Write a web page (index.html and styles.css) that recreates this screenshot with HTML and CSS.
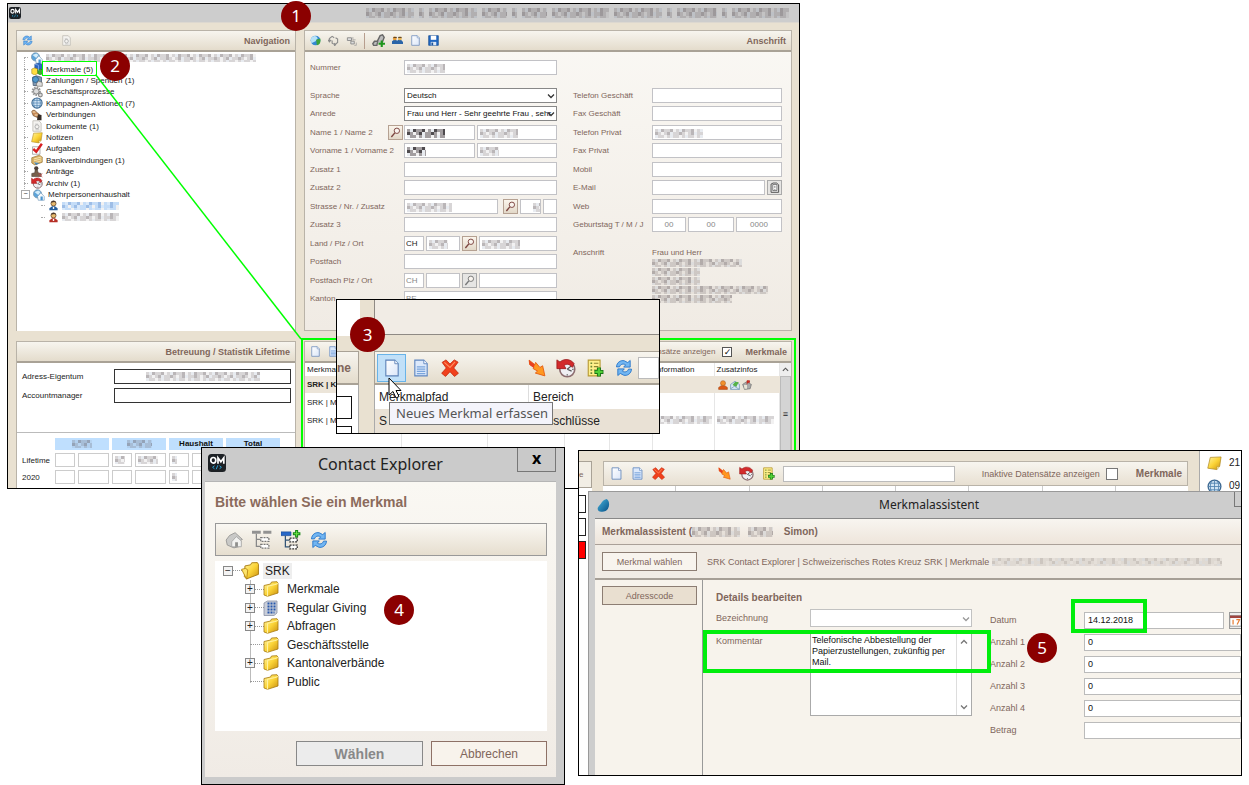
FILE: index.html
```html
<!DOCTYPE html>
<html lang="de">
<head>
<meta charset="utf-8">
<title>Contact Explorer – Merkmal erfassen</title>
<meta name="viewport" content="width=device-width, initial-scale=1">
<link rel="stylesheet" href="styles.css">
</head>
<body>
<svg class="sprite" aria-hidden="true">
  <defs>
    <linearGradient id="gold" x1="0" y1="0" x2="1" y2="1"><stop offset="0" stop-color="#fff3a0"/><stop offset=".5" stop-color="#fbd437"/><stop offset="1" stop-color="#c98f10"/></linearGradient>
    <linearGradient id="page" x1="0" y1="0" x2="1" y2="1"><stop offset="0" stop-color="#fff"/><stop offset="1" stop-color="#dbe6f8"/></linearGradient>
    <linearGradient id="drop" x1="0" y1="0" x2="1" y2="1"><stop offset="0" stop-color="#49b4dc"/><stop offset="1" stop-color="#064f86"/></linearGradient>
  </defs>
  <symbol id="om" viewBox="0 0 18 18"><rect width="18" height="18" rx="3.5" fill="#1d2125"/><ellipse cx="5.3" cy="6.3" rx="2.5" ry="2.8" fill="none" stroke="#fff" stroke-width="1.7"/><path d="M10 9.8V3.8l2.9 4 2.9-4v6" fill="none" stroke="#fff" stroke-width="1.7"/><path d="M6.5 11.8L4.6 13.3l1.9 1.5M11.5 11.8l1.9 1.5-1.9 1.5M9.8 11.3l-1.6 4" fill="none" stroke="#2ba3d4" stroke-width="1"/></symbol>
  <symbol id="refresh" viewBox="0 0 16 16"><path d="M1.300 7C1.600 3 5 .8 8.300 1.600L11.300 3.200 13.500 1.300V7.200H7.700L9.500 5.200C7.500 3.900 4.700 4.500 4 7z" fill="#72b6f2" stroke="#2675c9" stroke-width=".8"/><path d="M14.700 9c-.3 4-3.700 6.200-7 5.400L4.700 12.800 2.500 14.700V8.800h5.800L6.500 10.800c2 1.300 4.800.7 5.500-1.800z" fill="#72b6f2" stroke="#2675c9" stroke-width=".8"/></symbol>
  <symbol id="doc" viewBox="0 0 16 16"><path d="M2.500 1h8l3 3.200V15h-11z" fill="url(#page)" stroke="#5e82b8"/><path d="M10.500 1v3.200h3" fill="#fff" stroke="#5e82b8" stroke-width=".8"/></symbol>
  <symbol id="doclines" viewBox="0 0 16 16"><path d="M2.500 1h8l3 3.200V15h-11z" fill="#dce9fb" stroke="#5e86c0"/><path d="M10.500 1v3.200h3" fill="#fff" stroke="#5e86c0" stroke-width=".8"/><path d="M4.300 7h7.500M4.300 9h7.500M4.300 11h7.500M4.300 13h7.500" stroke="#7aa5dc" stroke-width="1.100"/></symbol>
  <symbol id="docgray" viewBox="0 0 16 16"><path d="M2.500 1h8l3 3.200V15h-11z" fill="#f4f3f0" stroke="#b9b6af"/><circle cx="8" cy="9" r="2.700" fill="none" stroke="#aaa" stroke-width="1.200"/><path d="M5.500 5.500h4M6 13h5" stroke="#bbb"/></symbol>
  <symbol id="cross" viewBox="0 0 16 16"><path d="M1 3L4.500.8 8 4.500 11.800.8 15.200 2.800 11.300 8l4.200 4.700L12 15.500 8 11.300l-4 4.200L.6 12.700 4.700 8z" fill="#f0401c" stroke="#c22608" stroke-width=".7"/><path d="M3 3l5 4.500L12.500 2.500" fill="none" stroke="#ff8f60" stroke-width="1"/></symbol>
  <symbol id="bolt" viewBox="0 0 16 16"><path d="M1 1l5 4 .8-2 3.800 4.500L13 6l2 9-8.500-2.500 2-1.800-4-2.200.8-1.200L1.500 5z" fill="#ff9820" stroke="#e45b10" stroke-width=".8"/><path d="M1 1l5 4-1 3L1.500 5z" fill="#e84020"/></symbol>
  <symbol id="history" viewBox="0 0 16 16"><circle cx="9" cy="9" r="6" fill="#efeff3" stroke="#8c6d70" stroke-width="1.300"/><path d="M9 9l3-2.500M9 9l3.500 1.500M9 13v1M13 9h1" stroke="#555" stroke-width="1"/><path d="M.7 1.500l2.500 1.700C6 .4 11.500.3 14.500 4.500l-1.500 3C10.500 4.500 8.500 4.500 6.500 6L8 8.500H.7z" fill="#d22b2c" stroke="#981518" stroke-width=".6"/></symbol>
  <symbol id="listadd" viewBox="0 0 16 16"><path d="M2 1h10.500v14H2z" fill="#fff08b" stroke="#b79a34"/><path d="M4 3.800h1.500M4 6.800h1.500M4 9.800h1.500M4 12.500h1.500" stroke="#6a8735" stroke-width="1.500"/><path d="M7 3.800h4M7 6.800h4M7 9.800h3" stroke="#8d8330"/><path d="M11.500 7.500v8M7.500 11.500h8" stroke="#167216" stroke-width="3.600"/><path d="M11.500 8.200v6.600M8.200 11.500h6.600" stroke="#50cf35" stroke-width="2"/></symbol>
  <symbol id="folder" viewBox="0 0 16 16"><path d="M1 4.500L7.500 3l1-2 5.500-.3 1 1.500V12L4.500 15.300 1 14z" fill="url(#gold)" stroke="#a6780f" stroke-width=".8"/><path d="M4.500 5.200L12 3.500 15 2.500M4.500 5.200v10" fill="none" stroke="#fff2a0" stroke-width="1.100"/></symbol>
  <symbol id="folderopen" viewBox="0 0 16 16"><path d="M3.500 3.500l5-1 1-1.800 5-.2 1 1.500v9L5 15 3 13z" fill="url(#gold)" stroke="#a6780f" stroke-width=".8"/><path d="M.5 6.500l3.500-.8 2 1.300-1 8.300z" fill="#fde46a" stroke="#b98814" stroke-width=".8"/></symbol>
  <symbol id="sheet" viewBox="0 0 16 16"><path d="M1 3L4.500 1h9.500v12l-3 2.500H1z" fill="#c9ced9" stroke="#8891a5" stroke-width=".8"/><path d="M4.500 3.500h8.500M4.500 6.500h8.500M4.500 9.500h8.500M4.500 12.500h7" stroke="#2858ac" stroke-width="2" stroke-dasharray="2 1"/></symbol>
  <symbol id="lens" viewBox="0 0 16 16"><circle cx="10" cy="5.500" r="3.900" fill="#f9f4ee" stroke="currentColor" stroke-width="1.400"/><path d="M7 8.500L2 14.500" stroke="currentColor" stroke-width="2"/></symbol>
  <symbol id="home" viewBox="0 0 16 16"><path d="M1 8L4 4l5-2.500 6.500 6L14 8v5.500L8 15 2 12.500z" fill="#c9c9c7" stroke="#8e8e8c" stroke-width=".7"/><path d="M6 9.500l4-4.500 4.500 3.800V14H6z" fill="#f2f2f0" stroke="#999" stroke-width=".6"/><path d="M9 10h2.500v4H9z" fill="#8f8f8d"/></symbol>
  <symbol id="treegray" viewBox="0 0 16 16"><path d="M0 .5h7v2.500H0zM9 .5h6.500V3H9z" fill="#929292"/><path d="M3.500 3v10h3M3.500 7.500h3" fill="none" stroke="#888"/><path d="M7 6h6.500v3H7zM7 11.500h6.500v3H7z" fill="#fff" stroke="#777" stroke-dasharray="1.500 .8"/></symbol>
  <symbol id="treeadd" viewBox="0 0 16 16"><path d="M0 1.500h8v3H0z" fill="#2868c8" stroke="#164893" stroke-width=".5"/><path d="M3.500 4.500v9h3M3.500 8h3" fill="none" stroke="#357"/><path d="M7 6.500h6v3H7zM7 12h6v3H7z" fill="#fff" stroke="#333" stroke-dasharray="1.500 .8"/><path d="M12.500 0v6M9.500 3h6" stroke="#138515" stroke-width="2.400"/><path d="M12.500.8v4.400M10.300 3h4.400" stroke="#6fe847" stroke-width=".8"/></symbol>
  <symbol id="globe" viewBox="0 0 16 16"><circle cx="8" cy="8" r="6.800" fill="#cfe3f3" stroke="#3e6890" stroke-width="1.400"/><path d="M8 1v14M1 8h14M2.500 4.500h11M2.500 11.500h11M5 2c-2 4-2 8 0 12M11 2c2 4 2 8 0 12" fill="none" stroke="#4e81b0" stroke-width=".9"/></symbol>
  <symbol id="house" viewBox="0 0 16 16"><circle cx="6" cy="6.500" r="5.500" fill="#5ca3d9" stroke="#7f99ac"/><path d="M2 4l5-2 3 2-3 4z" fill="#d3ecfa"/><path d="M6 10l4.500-5L15 10v5H7z" fill="#f7fafc" stroke="#6590b5" stroke-width=".8"/><path d="M10 10h3v5h-3z" fill="#4a95cf"/></symbol>
  <symbol id="cubes" viewBox="0 0 16 16"><path d="M5 1.500L10.500 0 15 2v7l-5 2-5-2z" fill="#2c66c2" stroke="#173e82" stroke-width=".6"/><path d="M1 8l4-1.500L9 8v6l-4 2-4-2z" fill="#ffdd40" stroke="#9d7b0b" stroke-width=".7"/><path d="M9 9l3.500-1L16 9.500v4L12.500 16 9 14z" fill="#45a834" stroke="#207015" stroke-width=".7"/><path d="M5 1.500l5 1.500v7" fill="none" stroke="#8bb5f0"/></symbol>
  <symbol id="pay" viewBox="0 0 16 16"><path d="M2 3l5-2 7 2v11H3z" fill="#819ab3" stroke="#42566d"/><circle cx="6" cy="6" r="4" fill="#5098cb" stroke="#285783"/><path d="M7 12l3-4 5 2v5H8z" fill="#ddd" stroke="#665f55" stroke-width=".8"/></symbol>
  <symbol id="gears" viewBox="0 0 16 16"><circle cx="7" cy="7" r="4.500" fill="none" stroke="#999" stroke-width="3.500" stroke-dasharray="2 1"/><circle cx="7" cy="7" r="3.700" fill="#ddd" stroke="#777"/><circle cx="12.500" cy="12" r="2.500" fill="#ddd" stroke="#888" stroke-width="1.500"/></symbol>
  <symbol id="people" viewBox="0 0 16 16"><path d="M1 4c0-3 5-3 6 0l4 3v7L8 11 3 9z" fill="#c98b56" stroke="#624021" stroke-width=".8"/><path d="M9 7l5 1v7H8z" fill="#372c26"/><path d="M2 4h4M5 8h4" stroke="#fae3be" stroke-width="1.500"/></symbol>
  <symbol id="note" viewBox="0 0 16 16"><path d="M3.500 1.500L15 1l-1.500 10-3 3.500L.8 13z" fill="url(#gold)" stroke="#b18c27" stroke-width=".8"/><path d="M10.500 14.500l0-3 3-.5" fill="#fff7bd" stroke="#b18c27" stroke-width=".6"/></symbol>
  <symbol id="check" viewBox="0 0 16 16"><path d="M2 5h10v10H2z" fill="#fff" stroke="#999"/><path d="M3 8l4 3.500L14.500 1" fill="none" stroke="#d81f22" stroke-width="3.200"/></symbol>
  <symbol id="bank" viewBox="0 0 16 16"><path d="M1 5l10-3.500L15 4v7L5 14.500 1 12z" fill="#d9b367" stroke="#8a6424" stroke-width=".8"/><path d="M4 6.500L14 4M4 9l10-2.500M4 12l10-3" stroke="#fff0c0"/><path d="M4 11l7 1-4 3z" fill="#4f89b6"/></symbol>
  <symbol id="stamp" viewBox="0 0 16 16"><circle cx="7" cy="3" r="2.800" fill="#4e4039"/><path d="M5.500 5h3l1 4 4 1v4H1v-4l4-1z" fill="#78604d" stroke="#40352d" stroke-width=".7"/><path d="M10 9l5 6M15 10l-5 5" stroke="#c54c4e"/></symbol>
  <symbol id="person" viewBox="0 0 16 16"><path d="M2 15V12l4-3h4l4 3v3z" fill="currentColor"/><circle cx="8" cy="5" r="3.700" fill="#e8b96d" stroke="#553b25"/><path d="M4.500 4c0-4 7-4 7 0L9 3z" fill="#49352a"/><path d="M7 10h2v3H7z" fill="#fff"/></symbol>
  <symbol id="contactperson" viewBox="0 0 16 16"><path d="M1 15V12l4-3h6l4 3v3z" fill="#dd5a16" stroke="#9c3c0a" stroke-width=".8"/><circle cx="8" cy="5" r="4" fill="#f2912d" stroke="#a2501a" stroke-width=".8"/></symbol>
  <symbol id="pair" viewBox="0 0 16 16"><path d="M0 13V9l3-2h3l3 4v2zM7 13V9l2-2h4l3 3v3z" fill="#2a64a8"/><circle cx="4" cy="5" r="2.700" fill="#e69b35"/><circle cx="11.500" cy="5" r="2.700" fill="#e6b557"/><path d="M2 3.500h5M9 3.500h5" stroke="#443223" stroke-width="1.300"/></symbol>
  <symbol id="save" viewBox="0 0 16 16"><path d="M1 1h14v14H1z" fill="#2067c1" stroke="#10478d"/><path d="M4 1h8v6H4z" fill="#fff"/><path d="M4 10h8v5H4z" fill="#dce7f5"/><path d="M5 11h2.500v4H5z" fill="#1c549a"/></symbol>
  <symbol id="ball" viewBox="0 0 16 16"><circle cx="8" cy="8" r="7" fill="#3488d2"/><path d="M1 6c3-7 10-5 10-1L8 9 2 12z" fill="#b6e2f8"/><path d="M9 7l6-2c1 6-1 9-5 10z" fill="#3ca33b"/></symbol>
  <symbol id="cycle" viewBox="0 0 16 16"><path d="M2 10V5l4-3 3 2M6 8v4l4 2 4-3V6l-3-2M0 7l2 3 2.500-3M9 12l2 2-2 2" fill="none" stroke="#8a8a8a" stroke-width="1.600"/></symbol>
  <symbol id="swap" viewBox="0 0 16 16"><path d="M2 4h6v4H2zM7 9h5v4H7z" fill="#ddd" stroke="#888" stroke-width="1.300"/><path d="M10 3v4h4M12 15h3v-4" fill="none" stroke="#999"/></symbol>
  <symbol id="clip" viewBox="0 0 16 16"><path d="M1 12l2-3h4l-1 5H2zM6 10l4-8 3-1 2 3-3 8" fill="#bbb" stroke="#666" stroke-width="1.700"/><path d="M12 8v8M8 12h8" stroke="#20961d" stroke-width="2.600"/></symbol>
  <symbol id="mail" viewBox="0 0 16 16"><path d="M1 7l7-5 7 5v8H1z" fill="#dceaf7" stroke="#5184ad"/><path d="M4 8l4-5h6l-4 8z" fill="#57b248"/><path d="M1 14l6-4 8 5" fill="none" stroke="#6488aa"/></symbol>
  <symbol id="mailbox" viewBox="0 0 16 16"><path d="M1 7l6-4 8 4-2 7-9 1z" fill="#aaa" stroke="#666"/><path d="M3 8h5v6H4z" fill="#e8e4d6"/><path d="M8 7V1h4v3h-3" fill="#e32d21" stroke="#a91a12"/></symbol>
  <symbol id="calendar" viewBox="0 0 16 16"><path d="M1 2h14v13H1z" fill="#fff" stroke="#888"/><path d="M1 2h14v3H1z" fill="#a04440"/><path d="M5 7v6M9 7h4l-3 6" fill="none" stroke="#e67d35" stroke-width="1.500"/></symbol>
  <symbol id="dropmark" viewBox="0 0 16 16"><path d="M12 0C15 2 16 7 13.500 12c-2 4-9 5-12 2-2-3 .5-5 3-8C6.500 3 8 1 12 0z" fill="url(#drop)"/></symbol>
  <symbol id="contact" viewBox="0 0 16 16"><path d="M3 3l3-1.500h5L14 4v11H3z" fill="#eee" stroke="#444" stroke-width="1.300"/><path d="M5.500 3.500h6v9h-6z" fill="#fff" stroke="#444"/><path d="M8.500 5.500v3M8.500 10v1.500" stroke="#777" stroke-width="1.400"/></symbol>
  <symbol id="chev" viewBox="0 0 8 8"><path d="M1 2.500L4 5.500l3-3" fill="none" stroke="currentColor" stroke-width="1.300"/></symbol>
  <symbol id="chevup" viewBox="0 0 8 8"><path d="M1 5.500l3-3 3 3" fill="none" stroke="currentColor" stroke-width="1.300"/></symbol>
</svg>

<main class="stage">

  <section class="window main-window" aria-label="Adressfenster">
    <header class="titlebar main-title">
      <svg class="i12"><use href="#om"/></svg>
      <span class="title-blur" aria-hidden="true"><i class="mosaic w50"></i><i class="mosaic w5"></i><i class="mosaic w50"></i><i class="mosaic w25"></i><i class="mosaic w5"></i><i class="mosaic w25"></i><i class="mosaic w60"></i><i class="mosaic w50"></i><i class="mosaic w5"></i><i class="mosaic w40"></i><i class="mosaic w5"></i><i class="mosaic w60"></i></span>
    </header>
    <div class="main-grid">
      <section class="panel nav-panel">
        <header class="bar">
          <button class="tool" aria-label="Aktualisieren"><svg class="i11"><use href="#refresh"/></svg></button>
          <button class="tool nav-doc" aria-label="Dokument"><svg class="i11"><use href="#docgray"/></svg></button>
          <h2 class="bar-title">Navigation</h2>
        </header>
        <ul class="nav-tree">
          <li><svg class="i12"><use href="#house"/></svg><i class="mosaic w210"></i></li>
          <li><svg class="i12"><use href="#cubes"/></svg><a href="#merkmale">Merkmale (5)</a></li>
          <li><svg class="i12"><use href="#pay"/></svg><a href="#zahlungen">Zahlungen / Spenden (1)</a></li>
          <li><svg class="i12"><use href="#gears"/></svg><a href="#prozesse">Geschäftsprozesse</a></li>
          <li><svg class="i12"><use href="#globe"/></svg><a href="#kampagnen">Kampagnen-Aktionen (7)</a></li>
          <li><svg class="i12"><use href="#people"/></svg><a href="#verbindungen">Verbindungen</a></li>
          <li><svg class="i12"><use href="#docgray"/></svg><a href="#dokumente">Dokumente (1)</a></li>
          <li><svg class="i12"><use href="#note"/></svg><a href="#notizen">Notizen</a></li>
          <li><svg class="i12"><use href="#check"/></svg><a href="#aufgaben">Aufgaben</a></li>
          <li><svg class="i12"><use href="#bank"/></svg><a href="#bank">Bankverbindungen (1)</a></li>
          <li><svg class="i12"><use href="#stamp"/></svg><a href="#antraege">Anträge</a></li>
          <li><svg class="i12"><use href="#history"/></svg><a href="#archiv">Archiv (1)</a></li>
          <li class="open"><svg class="i12"><use href="#house"/></svg><a href="#haushalt">Mehrpersonenhaushalt</a></li>
          <li class="child"><svg class="i11 blue"><use href="#person"/></svg><i class="mosaic bluish w60"></i></li>
          <li class="child"><svg class="i11 red"><use href="#person"/></svg><i class="mosaic w60"></i></li>
        </ul>
      </section>

      <section class="panel address-panel">
        <header class="bar">
          <button class="tool" aria-label="Übersicht"><svg class="i11"><use href="#ball"/></svg></button>
          <button class="tool" aria-label="Synchronisieren"><svg class="i11"><use href="#cycle"/></svg></button>
          <button class="tool" aria-label="Tauschen"><svg class="i11"><use href="#swap"/></svg></button>
          <span class="divider"></span>
          <button class="tool" aria-label="Verknüpfen"><svg class="i13"><use href="#clip"/></svg></button>
          <button class="tool" aria-label="Personen"><svg class="i11"><use href="#pair"/></svg></button>
          <button class="tool" aria-label="Neu"><svg class="i11"><use href="#doc"/></svg></button>
          <button class="tool" aria-label="Speichern"><svg class="i11"><use href="#save"/></svg></button>
          <h2 class="bar-title">Anschrift</h2>
        </header>
        <form class="address-form">
          <div class="row number-row"><label for="nr">Nummer</label><div class="fields"><input id="nr" class="redacted"></div></div>
          <div class="col">
            <div class="row"><label for="spr">Sprache</label><div class="fields"><div class="pick"><select id="spr"><option>Deutsch</option></select><svg><use href="#chev"/></svg></div></div></div>
            <div class="row"><label for="anr">Anrede</label><div class="fields"><div class="pick"><select id="anr"><option>Frau und Herr - Sehr geehrte Frau , sehr</option></select><svg><use href="#chev"/></svg></div></div></div>
            <div class="row"><label for="n1">Name 1 / Name 2</label><button type="button" class="find before" aria-label="Name suchen"><svg class="i11"><use href="#lens"/></svg></button><div class="fields"><input id="n1" class="redacted dark f71"><input aria-label="Name 2" class="redacted"></div></div>
            <div class="row"><label for="v1">Vorname 1 / Vorname 2</label><div class="fields"><input id="v1" class="redacted dark short f71"><input aria-label="Vorname 2" class="redacted short"></div></div>
            <div class="row"><label for="z1">Zusatz 1</label><div class="fields"><input id="z1"></div></div>
            <div class="row"><label for="z2">Zusatz 2</label><div class="fields"><input id="z2"></div></div>
            <div class="row"><label for="str">Strasse / Nr. / Zusatz</label><div class="fields"><input id="str" class="redacted long"><button type="button" class="find street" aria-label="Strasse suchen"><svg class="i11"><use href="#lens"/></svg></button><input aria-label="Nr." class="redacted tail f21"><input aria-label="Zusatz" class="f14"></div></div>
            <div class="row"><label for="z3">Zusatz 3</label><div class="fields"><input id="z3"></div></div>
            <div class="row"><label for="land">Land / Plz / Ort</label><div class="fields"><input id="land" class="f20 flush" value="CH"><input aria-label="Plz" class="redacted short f34"><button type="button" class="find" aria-label="Ort suchen"><svg class="i11"><use href="#lens"/></svg></button><input aria-label="Ort" class="redacted"></div></div>
            <div class="row"><label for="pf">Postfach</label><div class="fields"><input id="pf"></div></div>
            <div class="row"><label for="pfp">Postfach Plz / Ort</label><div class="fields"><input id="pfp" class="f20 flush faded" value="CH"><input aria-label="Postfach Plz" class="f34"><button type="button" class="find gray" aria-label="Postfach-Ort suchen"><svg class="i11"><use href="#lens"/></svg></button><input aria-label="Postfach Ort"></div></div>
            <div class="row"><label for="kt">Kanton</label><div class="fields"><input id="kt" class="faded flush" value="BE"></div></div>
          </div>
          <div class="col right">
            <div class="row"><label for="tg">Telefon Geschäft</label><div class="fields"><input id="tg"></div></div>
            <div class="row"><label for="fg">Fax Geschäft</label><div class="fields"><input id="fg"></div></div>
            <div class="row"><label for="tp">Telefon Privat</label><div class="fields"><input id="tp" class="redacted phone"></div></div>
            <div class="row"><label for="fp">Fax Privat</label><div class="fields"><input id="fp"></div></div>
            <div class="row"><label for="mo">Mobil</label><div class="fields"><input id="mo"></div></div>
            <div class="row"><label for="em">E-Mail</label><div class="fields"><input id="em"><button type="button" class="find gray" aria-label="E-Mail schreiben"><svg class="i11"><use href="#contact"/></svg></button></div></div>
            <div class="row"><label for="we">Web</label><div class="fields"><input id="we"></div></div>
            <div class="row"><label for="gt">Geburtstag T / M / J</label><div class="fields date"><input id="gt" class="f34" value="00"><input aria-label="Monat" value="00"><input aria-label="Jahr" value="0000"></div></div>
            <div class="row address"><span>Anschrift</span><div class="address-text"><span>Frau und Herr</span><i class="mosaic w90"></i><i class="mosaic w50"></i><i class="mosaic w50"></i><i class="mosaic w120"></i><i class="mosaic w80"></i></div></div>
          </div>
        </form>
      </section>

      <section class="panel stats-panel">
        <header class="bar"><h2 class="bar-title">Betreuung / Statistik Lifetime</h2></header>
        <form class="owner-form">
          <label for="own">Adress-Eigentum</label><input id="own" class="redacted wide">
          <label for="acc">Accountmanager</label><input id="acc">
        </form>
        <table class="stats">
          <colgroup><col class="cl"><col class="cn"><col class="cw"><col class="cn"><col class="cw"><col class="cn"><col class="cw"><col class="cn"><col class="cw"></colgroup>
          <thead><tr><td></td><th colspan="2"><i class="mosaic w20"></i></th><th colspan="2"><i class="mosaic w25"></i></th><th colspan="2">Haushalt</th><th colspan="2">Total</th></tr></thead>
          <tbody>
            <tr><th scope="row">Lifetime</th><td></td><td></td><td><i class="mosaic w10"></i></td><td><i class="mosaic w20"></i></td><td><i class="mosaic w5"></i></td><td></td><td></td><td></td></tr>
            <tr><th scope="row">2020</th><td></td><td></td><td></td><td></td><td><i class="mosaic w5"></i></td><td></td><td></td><td></td></tr>
          </tbody>
        </table>
      </section>

      <section class="panel traits-panel">
        <header class="bar">
          <button class="tool" aria-label="Neues Merkmal"><svg class="i11"><use href="#doc"/></svg></button>
          <button class="tool" aria-label="Merkmal bearbeiten"><svg class="i11"><use href="#doclines"/></svg></button>
          <label class="inactive">Inaktive Datensätze anzeigen <input type="checkbox" checked></label>
          <h2 class="bar-title">Merkmale</h2>
        </header>
        <div class="scroll-area">
          <table class="traits">
            <colgroup><col class="c96"><col class="c86"><col class="c77"><col class="c45"><col class="c43"><col class="c61"><col></colgroup>
            <thead><tr><th>Merkmal</th><th></th><th></th><th></th><th></th><th>Information</th><th>Zusatzinfos</th></tr></thead>
            <tbody>
              <tr class="selected"><td>SRK | Ka</td><td></td><td></td><td></td><td></td><td></td><td class="icons"><svg class="i10"><use href="#contactperson"/></svg> <svg class="i10"><use href="#mail"/></svg> <svg class="i10"><use href="#mailbox"/></svg></td></tr>
              <tr><td>SRK | Me</td><td></td><td></td><td></td><td></td><td></td><td></td></tr>
              <tr><td>SRK | Me</td><td></td><td></td><td></td><td></td><td><i class="mosaic w60"></i></td><td><i class="mosaic w60"></i></td></tr>
              <tr class="rest"><td></td><td></td><td></td><td></td><td></td><td></td><td></td></tr>
            </tbody>
          </table>
          <div class="scrollbar"><svg><use href="#chevup"/></svg><span class="thumb">≡</span></div>
        </div>
      </section>
    </div>
  </section>

  <span class="mark mark-tree"></span>
  <span class="mark mark-traits"></span>
  <svg class="connector" viewBox="0 0 207 266" aria-hidden="true"><path d="M0.500 0.500L206 265"/></svg>

  <section class="window zoom-window" aria-label="Ausschnitt Merkmale">
    <div class="zoom-left">
      <div class="zoom-white"></div>
      <div class="zoom-bar">ne</div>
      <div class="zoom-boxes"><span></span><span></span></div>
    </div>
    <div class="zoom-right">
      <div class="zoom-panel"></div>
      <div class="zoom-tools">
        <button class="tool active" aria-label="Neues Merkmal erfassen"><svg class="i18"><use href="#doc"/></svg></button>
        <button class="tool" aria-label="Bearbeiten"><svg class="i18"><use href="#doclines"/></svg></button>
        <button class="tool" aria-label="Löschen"><svg class="i18"><use href="#cross"/></svg></button>
        <button class="tool push" aria-label="Zuweisen"><svg class="i18"><use href="#bolt"/></svg></button>
        <button class="tool" aria-label="Verlauf"><svg class="i20"><use href="#history"/></svg></button>
        <button class="tool" aria-label="Liste ergänzen"><svg class="i18"><use href="#listadd"/></svg></button>
        <button class="tool" aria-label="Aktualisieren"><svg class="i18"><use href="#refresh"/></svg></button>
        <input aria-label="Suche">
      </div>
      <table class="zoom-table">
        <thead><tr><th>Merkmalpfad</th><th>Bereich</th></tr></thead>
        <tbody><tr><td>S</td><td>Ausschlüsse</td></tr></tbody>
      </table>
    </div>
    <span class="tooltip" role="tooltip">Neues Merkmal erfassen</span>
    <svg class="cursor" viewBox="0 0 14 22" aria-hidden="true"><path d="M1 1v17l4-3.500 3 6.500 3-1.500-3-6h5z" fill="#fff" stroke="#000"/></svg>
  </section>

  <section class="window wizard-window" aria-label="Merkmale bearbeiten">
    <div class="wiz-back">
      <div class="wiz-left"><div class="wiz-stub">e</div><div class="wiz-boxes"><span></span><span></span><span class="filled"></span></div></div>
      <div class="wiz-list">
        <header class="wiz-tools">
          <button class="tool" aria-label="Neu"><svg class="i13"><use href="#doc"/></svg></button>
          <button class="tool" aria-label="Bearbeiten"><svg class="i13"><use href="#doclines"/></svg></button>
          <button class="tool" aria-label="Löschen"><svg class="i13"><use href="#cross"/></svg></button>
          <button class="tool gap" aria-label="Zuweisen"><svg class="i13"><use href="#bolt"/></svg></button>
          <button class="tool" aria-label="Verlauf"><svg class="i15"><use href="#history"/></svg></button>
          <button class="tool" aria-label="Liste ergänzen"><svg class="i13"><use href="#listadd"/></svg></button>
          <input type="text" aria-label="Suche">
          <label>Inaktive Datensätze anzeigen <input type="checkbox"></label>
          <h2>Merkmale</h2>
        </header>
        <div class="wiz-strip"><i></i><i></i><i></i><i></i><i></i><i></i><i></i></div>
      </div>
      <ul class="wiz-side"><li><svg class="i15"><use href="#note"/></svg>21</li><li><svg class="i15"><use href="#globe"/></svg>09</li></ul>
    </div>
    <section class="wizard">
      <header class="wizard-title"><svg class="i13"><use href="#dropmark"/></svg><h2>Merkmalassistent</h2><button aria-label="Minimieren"></button></header>
      <div class="wizard-body">
        <p class="wizard-head">Merkmalassistent (<i class="mosaic big w50"></i><i class="mosaic big w25"></i> Simon)</p>
        <div class="wizard-path"><button>Merkmal wählen</button><span>SRK Contact Explorer | Schweizerisches Rotes Kreuz SRK | Merkmale <i class="mosaic pale w230"></i></span></div>
        <div class="wizard-main">
          <aside><button>Adresscode</button></aside>
          <form class="details">
            <h3>Details bearbeiten</h3>
            <div class="details-left">
              <label for="bez">Bezeichnung</label><div class="pick"><select id="bez"><option></option></select><svg><use href="#chev"/></svg></div>
              <label for="kom">Kommentar</label><div class="memo"><textarea id="kom">Telefonische Abbestellung der Papierzustellungen, zukünftig per Mail.</textarea><div class="memo-scroll"><svg><use href="#chevup"/></svg><svg><use href="#chev"/></svg></div></div>
            </div>
            <div class="details-right">
              <label for="dat">Datum</label><div class="date-line"><input id="dat" value="14.12.2018"><button type="button" aria-label="Kalender"><svg class="i13"><use href="#calendar"/></svg></button></div>
              <label for="a1">Anzahl 1</label><input id="a1" value="0">
              <label for="a2">Anzahl 2</label><input id="a2" value="0">
              <label for="a3">Anzahl 3</label><input id="a3" value="0">
              <label for="a4">Anzahl 4</label><input id="a4" value="0">
              <label for="bet">Betrag</label><input id="bet">
            </div>
          </form>
        </div>
      </div>
    </section>
  </section>

  <section class="window dialog" aria-label="Contact Explorer">
    <header class="dialog-title"><svg class="i18"><use href="#om"/></svg><h2>Contact Explorer</h2><button aria-label="Schliessen">x</button></header>
    <div class="dialog-body">
      <h3>Bitte wählen Sie ein Merkmal</h3>
      <div class="dialog-tools">
        <button class="tool" aria-label="Start"><svg class="i18"><use href="#home"/></svg></button>
        <button class="tool" aria-label="Zuklappen"><svg class="i20"><use href="#treegray"/></svg></button>
        <button class="tool" aria-label="Aufklappen"><svg class="i20"><use href="#treeadd"/></svg></button>
        <button class="tool" aria-label="Aktualisieren"><svg class="i18"><use href="#refresh"/></svg></button>
      </div>
      <div class="folder-tree">
        <div class="node root"><button class="toggle" aria-label="SRK schliessen">−</button><svg class="i18"><use href="#folderopen"/></svg><span class="chosen">SRK</span></div>
        <div class="branch">
          <div class="node"><button class="toggle" aria-label="Merkmale öffnen">+</button><svg class="i16"><use href="#folder"/></svg><span>Merkmale</span></div>
          <div class="node"><button class="toggle" aria-label="Regular Giving öffnen">+</button><svg class="i16"><use href="#sheet"/></svg><span>Regular Giving</span></div>
          <div class="node"><button class="toggle" aria-label="Abfragen öffnen">+</button><svg class="i16"><use href="#folder"/></svg><span>Abfragen</span></div>
          <div class="node leaf"><svg class="i16"><use href="#folder"/></svg><span>Geschäftsstelle</span></div>
          <div class="node"><button class="toggle" aria-label="Kantonalverbände öffnen">+</button><svg class="i16"><use href="#folder"/></svg><span>Kantonalverbände</span></div>
          <div class="node leaf"><svg class="i16"><use href="#folder"/></svg><span>Public</span></div>
        </div>
      </div>
      <footer class="actions"><button class="primary">Wählen</button><button>Abbrechen</button></footer>
    </div>
  </section>

  <span class="mark thick mark-date"></span>
  <span class="mark thick mark-comment"></span>
  <span class="badge b1">1</span>
  <span class="badge b2">2</span>
  <span class="badge large b3">3</span>
  <span class="badge b4">4</span>
  <span class="badge b5">5</span>
</main>
</body>
</html>
```

FILE: styles.css
```css
* { box-sizing: border-box; }
:root {
  --sans: "Liberation Sans", sans-serif;
  --ui: "Noto Sans", sans-serif;
  --sand: #e9e1d1;
  --brown: #80665b;
  --line: #a9a296;
}
body { margin: 0; background: #fff; font-family: var(--sans); font-size: 8px; color: #222; }
h2, h3, p, ul { margin: 0; padding: 0; font-weight: normal; }
ul { list-style: none; }
a { color: inherit; text-decoration: none; }
button, input, select, textarea { font: inherit; color: inherit; margin: 0; padding: 0; border-radius: 0; outline: none; }
button { display: flex; align-items: center; justify-content: center; }
svg { display: block; flex: none; }
.sprite { position: absolute; width: 0; height: 0; }
.i10 { width: 10px; height: 10px; }
.i11 { width: 11px; height: 11px; }
.i12 { width: 12px; height: 12px; }
.i13 { width: 13px; height: 13px; }
.i15 { width: 15px; height: 15px; }
.i16 { width: 16px; height: 16px; }
.i18 { width: 18px; height: 18px; }
.i20 { width: 20px; height: 20px; }
.blue { color: #245d9c; }
.red { color: #b62f26; }
.tool { border: 0; background: none; }

/* Free canvas with overlapping windows */
.stage { position: relative; min-height: 785px; overflow: hidden; }
.window { position: absolute; border: 1px solid #000; overflow: hidden; background: var(--sand); }
.main-window { left: 7px; top: 3px; width: 793px; height: 486px; }
.zoom-window { left: 336px; top: 299px; width: 324px; height: 135px; }
.dialog { left: 201px; top: 447px; width: 364px; height: 338px; }
.wizard-window { left: 578px; right: 7px; top: 450px; height: 326px; }

/* Pixelated personal data */
.mosaic, .redacted {
  --a: rgba(90, 80, 85, .42);
  --b: rgba(90, 80, 85, .24);
  --c: rgba(110, 130, 160, .16);
  --d: rgba(90, 80, 85, .08);
  background-image:
    repeating-linear-gradient(90deg, var(--b) 0 3px, var(--c) 3px 6px, var(--a) 6px 9px, var(--b) 9px 15px, var(--a) 15px 18px, var(--d) 18px 21px),
    repeating-linear-gradient(90deg, var(--a) 0 3px, var(--b) 3px 6px, var(--d) 6px 9px, var(--b) 9px 12px, var(--a) 12px 15px, var(--c) 15px 18px, var(--b) 18px 24px),
    repeating-linear-gradient(90deg, var(--c) 0 3px, var(--b) 3px 9px, var(--d) 9px 12px, var(--b) 12px 15px);
  background-repeat: no-repeat;
}
.mosaic { display: inline-block; flex: none; height: 8px; background-size: 100% 3px; background-position: 0 0, 0 3px, 0 6px; vertical-align: middle; }
.redacted { background-size: 38px 3px; background-position: 2px 3px, 2px 6px, 2px 9px; }
.redacted.phone { background-size: 48px 3px; }
.redacted.short { background-size: 19px 3px; }
.redacted.long { background-size: 45px 3px; }
.redacted.tail { background-size: 8px 3px; background-position: 12px 3px, 12px 6px, 12px 9px; }
.redacted.wide { background-size: 114px 3px; background-position: 50% 2px, 50% 5px, 50% 8px; }
.redacted.dark { --a: rgba(20, 15, 20, .75); --b: rgba(50, 40, 45, .45); }
.mosaic.bluish { --a: rgba(40, 110, 200, .45); --b: rgba(60, 140, 230, .3); --c: rgba(60, 140, 230, .2); }
.mosaic.pale { --a: rgba(120, 110, 105, .3); --b: rgba(120, 110, 105, .15); }
.mosaic.big { height: 10px; margin-right: 8px; background-size: 100% 4px; background-position: 0 0, 0 4px, 0 8px; }
.w5 { width: 5px; } .w10 { width: 10px; } .w20 { width: 20px; } .w25 { width: 25px; } .w40 { width: 40px; }
.w50 { width: 48px; } .w60 { width: 57px; } .w80 { width: 80px; } .w90 { width: 90px; }
.w120 { width: 116px; } .w210 { width: 210px; } .w230 { width: 230px; }

/* Main window */
.main-title { height: 19px; display: flex; align-items: center; background: #cdcdcd; border-bottom: 1px solid #ddd8d0; }
.main-title > svg { margin-left: 1px; }
.title-blur { display: flex; gap: 5px; margin-left: 345px; }
.title-blur .mosaic { height: 10px; background-size: 100% 4px; background-position: 0 0, 0 4px, 0 8px; }
.main-grid { display: grid; grid-template-columns: 280px 1fr; grid-template-rows: 301px 160px; gap: 10px 8px; padding: 7px 7px 0 8px; }
.panel { border: 1px solid #b9b3a8; background: #fff; min-width: 0; overflow: hidden; }
.bar { height: 21px; display: flex; align-items: center; padding: 0 5px; background: linear-gradient(#f7f5ef, #e4dccc); border-bottom: 2px solid var(--line); }
.bar-title { margin-left: auto; font-family: var(--sans); font-size: 9px; font-weight: bold; color: var(--brown); }
.nav-doc { margin-left: 28px; }
.nav-panel { background: #fff; border-bottom: 0; }
.nav-tree { display: grid; grid-template-rows: repeat(15, minmax(0, 1fr)); height: 171px; margin-left: 7px; position: relative; }
.nav-tree::before { content: ""; position: absolute; left: 0; top: 6px; bottom: 28px; border-left: 1px dotted #aaa; }
.nav-tree li { display: flex; align-items: center; gap: 3px; white-space: nowrap; color: #222; }
.nav-tree li::before { content: ""; width: 4px; border-top: 1px dotted #aaa; }
.nav-tree .child { padding-left: 17px; }
.nav-tree .open::before { content: "−"; width: 7px; height: 7px; margin-left: -3px; border: 1px solid #aaa; background: #fff; font-size: 7px; line-height: 5px; text-align: center; z-index: 1; }
.nav-tree .open svg { margin-left: 0; }
.nav-tree .open { gap: 3px; }

.address-panel { background: linear-gradient(#faf8f4, #f0ebe4); }
.address-panel .bar { gap: 7px; }
.divider { height: 16px; border-left: 1px solid #b79e8e; }
.address-form { display: grid; grid-template-columns: 247px 209px; column-gap: 16px; padding: 6px 5px; color: var(--brown); }
.row { display: grid; grid-template-columns: 94px 1fr; align-items: center; position: relative; white-space: nowrap; }
.number-row { grid-column: 1; height: 19px; margin-bottom: 9px; }
.col { grid-column: 1; display: grid; grid-auto-rows: 1fr; height: 222px; }
.col.right { grid-column: 2; grid-template-rows: repeat(8, 1fr) 4fr; }
.right .row { grid-template-columns: 79px 1fr; }
.right .address { align-items: start; padding-top: 14px; }
.address-text { display: grid; row-gap: 1px; line-height: 10px; }
.fields { display: flex; gap: 2px; min-width: 0; }
.fields input { flex: 1; width: 0; min-width: 0; height: 15px; border: 1px solid #c2c2c6; background-color: #fff; padding-left: 3px; color: #222; }
.fields input.f14 { flex: 0 0 14px; }
.fields input.f20 { flex: 0 0 20px; }
.fields input.f21 { flex: 0 0 21px; }
.fields input.f34 { flex: 0 0 34px; }
.fields input.f71 { flex: 0 0 71px; }
.fields input.flush { padding-left: 1px; }
.fields input.faded, .fields.date input { color: #888; }
.fields.date input { padding: 0; text-align: center; }
.find { width: 15px; height: 15px; border: 1px solid #b5a192; background: linear-gradient(#fbf5ec, #e2d8c8); color: #7c443f; flex: none; }
.find.gray { border-color: #aaa; background: #e6e5e3; color: #777; }
.find.street { margin-left: 3px; }
.find.before { position: absolute; left: 78px; }
.pick { position: relative; flex: 1; min-width: 0; }
.pick select { appearance: none; display: block; width: 100%; height: 15px; padding: 0 2px; border: 1px solid #888; background: #fff; color: #111; }
.pick svg { position: absolute; right: 2px; top: 4px; width: 8px; height: 8px; color: #333; pointer-events: none; }

.owner-form { display: grid; grid-template-columns: 92px 1fr; row-gap: 4px; align-items: center; align-content: start; height: 70px; padding: 6px 4px 0 5px; border-bottom: 1px solid #bbb; }
.owner-form input { width: 100%; height: 15px; border: 1px solid #333; background-color: #fff; }
.stats { border-spacing: 3px; margin: 2px 0 0 0; width: 266px; table-layout: fixed; }
.cl { width: 32px; } .cn { width: 20px; } .cw { width: 31px; }
.stats thead td { padding: 0; }
.stats thead th { height: 12px; padding: 0; background: #bfdffe; font-size: 8px; line-height: 10px; color: #111; }
.stats tbody td { height: 14px; padding: 0 2px; border: 1px solid #ccc; line-height: 8px; overflow: hidden; }
.stats tbody th { font-weight: normal; text-align: left; padding: 0 0 0 2px; }

.traits-panel .bar { gap: 7px; padding-right: 4px; }
.inactive { display: flex; align-items: center; gap: 7px; margin-left: auto; color: var(--brown); white-space: nowrap; }
.inactive input { width: 10px; height: 10px; appearance: none; border: 1px solid #555; background: #fff; display: grid; place-items: center; }
.inactive input:checked::before { content: "✓"; font: bold 9px/9px "DejaVu Sans", sans-serif; color: #111; }
.traits-panel .bar-title { margin-left: 6px; }
.scroll-area { display: flex; height: 139px; }
.traits { flex: 1; border-collapse: collapse; table-layout: fixed; }
.c96 { width: 96px; } .c86 { width: 86px; } .c77 { width: 77px; } .c45 { width: 45px; } .c43 { width: 43px; } .c61 { width: 61px; }
.traits th, .traits td { padding: 0 2px; border-right: 1px solid #e6e6e6; text-align: left; font-weight: normal; white-space: nowrap; overflow: hidden; }
.traits th { height: 13px; }
.traits td { height: 18px; }
.traits .selected td { height: 17px; font-weight: bold; background: #ece5d9; border: 0; }
.traits .rest td { height: auto; }
.traits .icons { padding-left: 4px; }
.traits .icons svg { display: inline-block; vertical-align: middle; }
.scrollbar { width: 11px; background: #eee; display: flex; flex-direction: column; align-items: center; gap: 3px; padding-top: 3px; }
.scrollbar svg { width: 7px; height: 7px; color: #555; }
.thumb { flex: 1; width: 11px; border: 1px solid #bbb; background: #d4d4d4; display: flex; align-items: center; justify-content: center; padding-bottom: 50px; font: 9px/9px var(--sans); }

/* Highlights and step numbers */
.mark { position: absolute; border: 1px solid #0f0; }
.mark.thick { border: 4px solid #00ee0c; }
.mark-tree { left: 42px; top: 61px; width: 55px; height: 15px; }
.mark-traits { left: 301px; top: 338px; width: 495px; height: 150px; border-width: 2px 2px 0; }
.mark-date { left: 1071px; top: 599px; width: 76px; height: 34px; }
.mark-comment { left: 703px; top: 630px; width: 288px; height: 43px; }
.connector { position: absolute; left: 95px; top: 74px; width: 207px; height: 266px; fill: none; stroke: #0f0; stroke-width: 1.500px; }
.badge { position: absolute; width: 30px; height: 30px; border-radius: 50%; background: #8b0000; color: #fff; display: grid; place-items: center; font: 17px/20px var(--ui); }
.badge.large { width: 35px; height: 35px; }
.b1 { left: 281px; top: 1px; }
.b2 { left: 100px; top: 51px; }
.b3 { left: 350px; top: 317px; }
.b4 { left: 384px; top: 595px; }
.b5 { left: 1027px; top: 633px; }

/* Magnified toolbar */
.zoom-window { display: grid; grid-template-columns: 23px 1fr; grid-template-rows: minmax(0, 1fr); column-gap: 14px; }
.zoom-left, .zoom-right { display: flex; flex-direction: column; min-width: 0; min-height: 0; }
.zoom-left > *, .zoom-right > * { flex-shrink: 0; }
.zoom-white { height: 36px; background: #fff; margin-bottom: 15px; }
.zoom-bar { height: 34px; width: 22px; border: 1px solid var(--line); border-left: 0; border-bottom-width: 2px; background: linear-gradient(#f7f5ef, #e4dccc); font: bold 12px/32px var(--sans); color: var(--brown); }
.zoom-boxes { flex: 1; width: 22px; background: #fff; border-right: 1px solid #aaa; padding-top: 11px; display: grid; row-gap: 7px; align-content: start; }
.zoom-boxes span { width: 15px; height: 23px; border: 1px solid #111; border-left: 0; }
.zoom-panel { height: 35px; background: #f1ece5; border-left: 1px solid #8f8a84; border-bottom: 1px solid #8f8a84; margin-bottom: 16px; }
.zoom-tools { height: 34px; display: flex; align-items: center; padding-left: 2px; border: 1px solid var(--line); border-right: 0; border-bottom-width: 2px; background: linear-gradient(#f7f5ef, #e4dccc); }
.zoom-tools .tool { width: 29px; height: 28px; flex: none; }
.zoom-tools .active { border: 1px solid #68b3e8; background: #c1e0f8; }
.zoom-tools .push { margin-left: 58px; }
.zoom-tools input { flex: 1; min-width: 0; height: 22px; border: 1px solid #bbb; background: #fff; }
.zoom-table { border-collapse: collapse; table-layout: fixed; width: 100%; background: #fff; border-left: 1px solid #aaa; font-family: var(--sans); font-size: 12px; color: #222; }
.zoom-table th, .zoom-table td { padding: 0 4px; height: 24px; text-align: left; font-weight: normal; }
.zoom-table th:first-child { width: 154px; border-right: 1px solid #ddd; }
.zoom-table td { background: #e9e1d5; }
.tooltip { position: absolute; left: 52px; top: 102px; padding: 1px 4px 2px 6px; border: 1px solid #777; background: #f4f4fb; color: #555; font: 13px/18px var(--ui); white-space: nowrap; }
.cursor { position: absolute; left: 51px; top: 77px; width: 14px; height: 22px; }

/* Dialog */
.dialog { background: #cbcbcb; display: flex; flex-direction: column; padding: 0 8px 7px 3px; }
.dialog-title { height: 33px; display: flex; align-items: start; padding-left: 3px; }
.dialog-title svg { margin-top: 6px; }
.dialog-title h2 { flex: 1; text-align: center; font: 16px/32px var(--ui); color: #222; padding-left: 18px; }
.dialog-title button { width: 39px; height: 24px; border: 1px solid #777; border-top: 0; background: #c9c9c9; font: bold 16px/18px var(--ui); color: #000; padding-bottom: 4px; }
.dialog-body { flex: 1; display: flex; flex-direction: column; padding: 10px 9px 11px 10px; background: linear-gradient(#faf8f3, #f0ebe5); border-top: 1px solid #b5b5b5; }
.dialog-body h3 { font: bold 14px/21px var(--sans); color: #8b6b5c; }
.dialog-tools { height: 33px; margin: 10px 0 5px; display: flex; align-items: center; gap: 9px; padding-left: 9px; border: 1px solid #999; background: linear-gradient(#faf8f3, #e6decf); }
.folder-tree { flex: 1; background: #fff; padding: 0 8px; font: 12px/16px var(--sans); color: #222; }
.node { display: flex; align-items: center; gap: 8px; min-height: 0; position: relative; }
.node::before { content: ""; position: absolute; left: 5px; width: 18px; border-top: 1px dotted #999; }
.node svg { position: relative; }
.root { height: 19px; }
.toggle { width: 10px; height: 10px; border: 1px solid #888; background: #f3f3f3; font: 10px/8px var(--sans); position: relative; z-index: 1; }
.root .chosen { background: #eee; padding: 0 2px; margin-left: -4px; }
.branch { margin-left: 27px; border-left: 1px dotted #999; height: 111px; display: grid; grid-template-rows: repeat(6, minmax(0, 1fr)); border-image: linear-gradient(#bbb 92%, transparent 92%) 1; }
.branch .node { margin-left: -6px; }
.branch .leaf { padding-left: 18px; }
.actions { display: flex; justify-content: flex-end; gap: 8px; padding-top: 10px; }
.actions button { width: 116px; height: 25px; border: 1px solid #8e7166; background: #f8f3ec; font: 12px/16px var(--sans); color: #80665b; }
.actions .primary { width: 127px; border-color: #888; background: #ececec; color: #888; font-weight: bold; font-size: 14px; }

/* Wizard */
.wiz-back { display: grid; grid-template-columns: 13px minmax(0, 1fr) 42px; column-gap: 11px; height: 100%; padding-top: 10px; }
.wiz-left { display: flex; flex-direction: column; }
.wiz-stub { height: 27px; border: 1px solid var(--line); border-left: 0; background: #f2eee5; line-height: 25px; color: var(--brown); }
.wiz-boxes { flex: 1; background: #fff; padding-top: 7px; display: grid; gap: 5px; align-content: start; }
.wiz-boxes span { width: 7px; height: 18px; border: 1px solid #222; border-left: 0; }
.wiz-boxes .filled { background: red; }
.wiz-tools { height: 25px; display: flex; align-items: center; gap: 8px; padding: 0 5px 0 6px; border: 1px solid #b9b3a8; background: linear-gradient(#f7f5ef, #e8e0d2); color: var(--brown); }
.wiz-tools .gap { margin-left: 45px; }
.wiz-tools > input { width: 172px; height: 16px; border: 1px solid #bbb; background: #fff; }
.wiz-tools label { display: flex; align-items: center; gap: 6px; margin-left: auto; font-size: 9px; white-space: nowrap; }
.wiz-tools label input { appearance: none; width: 12px; height: 12px; border: 1px solid #777; background: #fff; }
.wiz-tools h2 { margin-left: 10px; font-size: 10px; font-weight: bold; }
.wiz-strip { display: flex; height: 6px; background: #fff; justify-content: space-evenly; }
.wiz-strip i { border-left: 1px solid #ccc; }
.wiz-side { margin-top: -10px; background: #fff; border-left: 1px solid #aaa; padding-left: 7px; font: 10px/24px var(--sans); }
.wiz-side li { display: flex; align-items: center; gap: 7px; height: 24px; margin-bottom: -1px; padding-right: 2px; white-space: nowrap; }
.wiz-side li + li { margin-top: 0; }
.wizard { position: absolute; left: 9px; right: 0; top: 40px; bottom: 0; display: flex; flex-direction: column; padding-left: 6px; background: #cdcdcd; border: 1px solid #999; border-right: 0; border-bottom: 0; }
.wizard-title { display: flex; align-items: center; height: 26px; }
.wizard-title > svg { margin-left: 2px; }
.wizard-title h2 { flex: 1; text-align: center; font: 12px/24px var(--ui); color: #222; padding-left: 14px; }
.wizard-title button { align-self: start; width: 7px; height: 15px; border: 1px solid #777; border-width: 0 0 1px 1px; background: none; }
.wizard-body { flex: 1; display: flex; flex-direction: column; background: #f7f3ec; border-top: 1px solid #888; color: var(--brown); }
.wizard-head { height: 26px; padding-left: 7px; font: bold 10px/25px var(--sans); background: linear-gradient(#f8f5f0, #eee5db); border-bottom: 1px solid #aaa098; }
.wizard-path { height: 35px; display: flex; align-items: center; gap: 10px; padding-left: 7px; background: #f1ece5; border-bottom: 2px solid #a69f96; font-size: 9px; white-space: nowrap; }
.wizard-path button, .wizard-main aside button { flex: none; width: 95px; height: 19px; border: 1px solid #8c7d73; background: #f8f4ee; font-size: 9px; }
.wizard-main { flex: 1; display: grid; grid-template-columns: 108px 1fr; }
.wizard-main aside { border-right: 1px solid #999; padding: 6px 7px; }
.wizard-main aside button { background: #e9dfd0; }
.details { display: grid; grid-template-columns: 256px 1fr; column-gap: 18px; align-content: start; padding: 9px 0 0 13px; font-size: 9px; }
.details h3 { grid-column: 1 / -1; margin-bottom: 2px; font: bold 10px/18px var(--sans); }
.details-left { display: grid; grid-template-columns: 94px 1fr; row-gap: 6px; align-items: center; align-content: start; }
.details .pick select { height: 18px; border-color: #c2c2c2; }
.details .pick svg { top: 6px; color: #999; }
.memo { display: flex; height: 83px; border: 1px solid #aaa; background: #fff; }
.memo textarea { flex: 1; min-width: 0; border: 0; padding: 1px 0 0 1px; resize: none; overflow: hidden; background: none; color: #111; line-height: 11px; }
.memo-scroll { width: 15px; border-left: 1px solid #ddd; display: flex; flex-direction: column; justify-content: space-between; align-items: center; padding: 4px 0; color: #777; }
.memo-scroll svg { width: 8px; height: 8px; }
.details-left label[for="kom"] { align-self: start; padding-top: 3px; }
.details-right { display: grid; grid-template-columns: 94px 1fr; grid-auto-rows: 22px; align-items: center; }
.details-right input { width: 100%; min-width: 0; height: 17px; border: 1px solid #bbb; background: #fff; padding-left: 3px; color: #111; }
.date-line { display: flex; gap: 5px; min-width: 0; }
.date-line button { flex: 0 0 12px; height: 17px; border: 1px solid #999; border-right: 0; background: #eee; overflow: hidden; }
```
